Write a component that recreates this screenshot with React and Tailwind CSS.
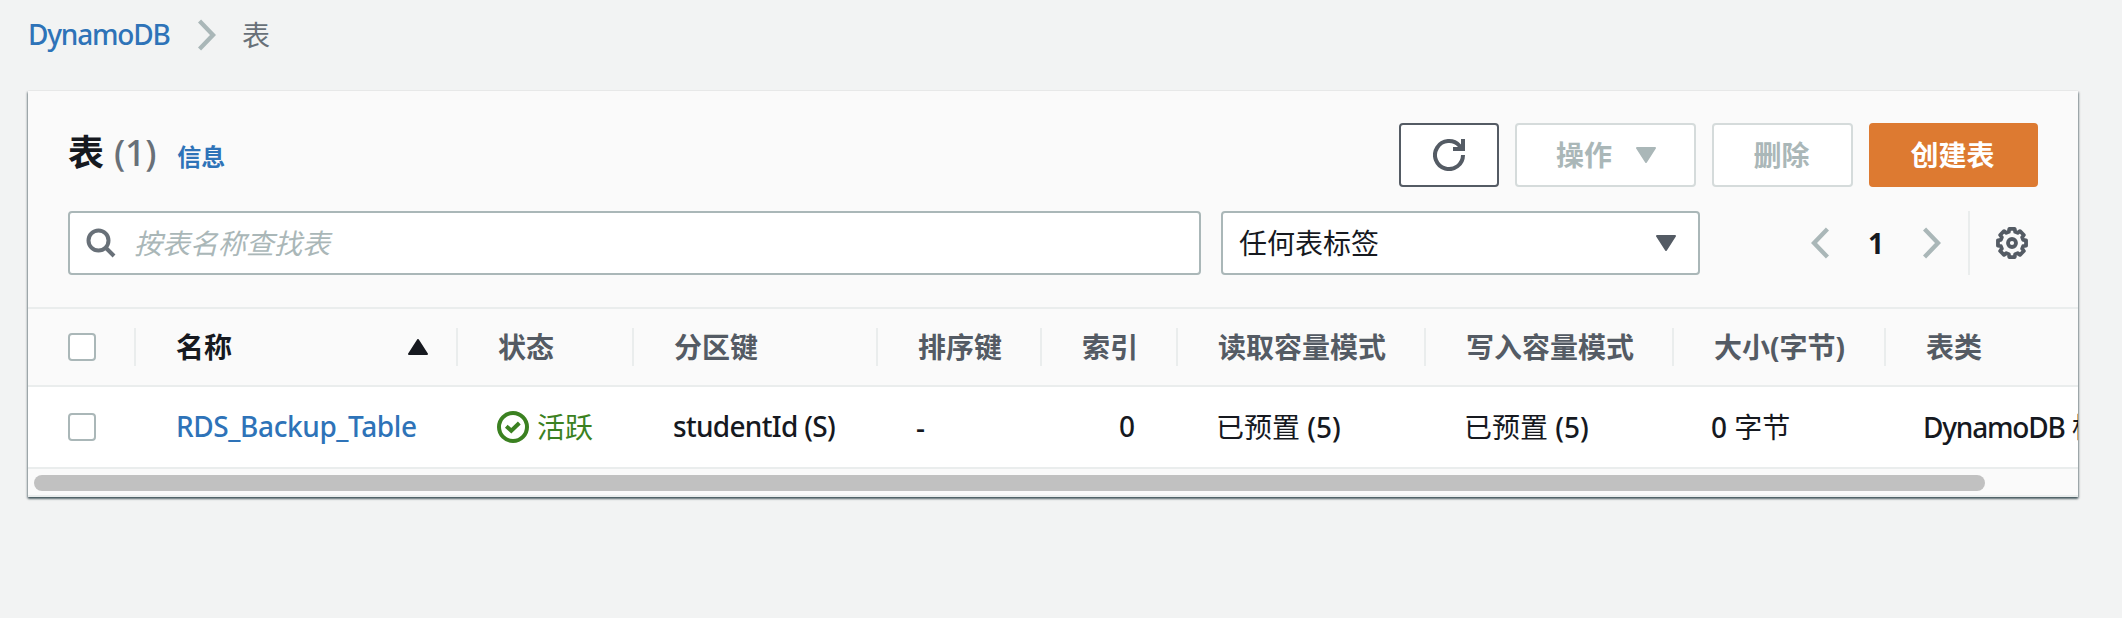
const FONT = "font-['Noto_Sans','Noto_Sans_CJK_SC',sans-serif]";

function Triangle({ up = false, className = "" }) {
  return (
    <svg viewBox="0 0 20 16" className={`h-4 w-5 shrink-0 ${className}`} fill="currentColor" stroke="currentColor" strokeWidth="2" strokeLinejoin="round">
      {up ? <path d="M10 1 19 15H1z" /> : <path d="M1 1h18l-9 14z" />}
    </svg>
  );
}

function Chevron({ left = false, className = "" }) {
  return (
    <svg viewBox="0 0 18 32" className={`h-8 w-[18px] shrink-0 ${className}`} fill="none" stroke="currentColor" strokeWidth="4.400">
      {left ? <path d="M16.500 2 3 16l13.500 14" /> : <path d="M1.500 2l13.500 14L1.500 30" />}
    </svg>
  );
}

function RefreshIcon() {
  return (
    <svg viewBox="0 0 32 32" className="h-8 w-8" fill="none" stroke="currentColor" strokeWidth="4">
      <path d="M30 16a14 14 0 1 1-3.500-9.200L29 10" />
      <path d="M30 0v10H20" />
    </svg>
  );
}

function SearchIcon() {
  return (
    <svg viewBox="0 0 30 30" className="h-[30px] w-[30px] shrink-0 text-[#687078]" fill="none" stroke="currentColor" strokeWidth="4">
      <circle cx="12.5" cy="12.5" r="10" />
      <path d="M19.500 19.500 28 28" />
    </svg>
  );
}

function gearPoints() {
  const points = [];
  for (let tooth = 0; tooth < 8; tooth += 1) {
    for (const [radius, offset] of [[14.3, -11], [14.3, 11], [11.6, 16], [11.6, 29]]) {
      const angle = ((tooth * 45 + offset) * Math.PI) / 180;
      points.push(`${(16 + radius * Math.cos(angle)).toFixed(2)},${(16 + radius * Math.sin(angle)).toFixed(2)}`);
    }
  }
  return points.join(" ");
}

function GearIcon() {
  return (
    <svg viewBox="0 0 32 32" className="h-8 w-8 text-[#545b64]" fill="none" stroke="currentColor" strokeWidth="3.800" strokeLinejoin="round">
      <polygon points={gearPoints()} />
      <circle cx="16" cy="16" r="4" />
    </svg>
  );
}

function StatusIcon() {
  return (
    <svg viewBox="0 0 32 32" className="h-8 w-8 shrink-0" fill="none" stroke="currentColor" strokeWidth="4">
      <circle cx="16" cy="16" r="14" />
      <path d="M9.300 15.200 14.300 19.800 22.300 12" />
    </svg>
  );
}

function Checkbox() {
  return <span className="block h-7 w-7 rounded-[4px] border-2 border-[#aab7b8] bg-white" />;
}

const columns = [
  { label: "名称", width: "w-[322px]" },
  { label: "状态", width: "w-[176px]" },
  { label: "分区键", width: "w-[244px]" },
  { label: "排序键", width: "w-[164px]" },
  { label: "索引", width: "w-[136px]" },
  { label: "读取容量模式", width: "w-[248px]" },
  { label: "写入容量模式", width: "w-[248px]" },
  { label: "大小(字节)", width: "w-[212px]" },
  { label: "表类", width: "w-[300px]" },
];

const button = "flex h-16 items-center justify-center rounded-[4px] border-2 text-[28px] font-bold";

export default function App() {
  return (
    <div className={`flex h-[618px] w-[2122px] flex-col overflow-hidden bg-[#f2f3f3] pl-7 text-[28px] leading-[44px] text-[#16191f] ${FONT}`}>
      <nav className="flex h-[91px] items-start pt-[13px]">
        <a className="-mt-px w-[170px] font-medium tracking-[-1.2px] text-[#2e73b8]">DynamoDB</a>
        <Chevron className="mt-[6px] text-[#aab7b8]" />
        <span className="ml-[26px] text-[#687078]">表</span>
      </nav>

      <main className="h-[406px] w-[2050px] overflow-hidden bg-[#fafafa] shadow-[0_2px_2px_0_rgba(0,28,36,0.5),1px_1px_2px_0_rgba(0,28,36,0.3),-1px_1px_2px_0_rgba(0,28,36,0.3)]">
        <header className="flex h-[96px] items-end justify-between pl-10 pr-10">
          <div className="flex h-16 items-baseline">
            <h1 className="text-[36px] font-bold leading-[60px]">表</h1>
            <span className="ml-[10px] text-[36px] font-medium tracking-[-0.3px] text-[#687078]">(1)</span>
            <a className="ml-[21px] text-[24px] font-bold text-[#2e73b8]">信息</a>
          </div>
          <div className="flex gap-4">
            <button className={`${button} w-[100px] border-[#545b64] bg-white text-[#545b64]`}><RefreshIcon /></button>
            <button className={`${button} w-[181px] gap-[24px] border-[#d5dbdb] bg-white pl-px text-[#aab7b8]`}>操作<Triangle /></button>
            <button className={`${button} w-[141px] border-[#d5dbdb] bg-white pr-[2px] text-[#aab7b8]`}>删除</button>
            <button className={`${button} w-[169px] border-[#dd7a31] bg-[#dd7a31] pr-[2px] text-white`}>创建表</button>
          </div>
        </header>

        <section className="flex h-[120px] items-start pl-10 pt-6">
          <div className="flex h-16 w-[1133px] items-center rounded-[4px] border-2 border-[#aab7b8] bg-white pl-4">
            <SearchIcon />
            <span className="ml-[18px] italic text-[#aab7b8]">按表名称查找表</span>
          </div>
          <div className="ml-5 flex h-16 w-[479px] items-center justify-between rounded-[4px] border-2 border-[#aab7b8] bg-white pl-4 pr-[22px]">
            任何表标签
            <Triangle className="text-[#545b64]" />
          </div>
          <div className="ml-[111px] flex h-16 items-center text-[#aab7b8]">
            <Chevron left />
            <span className="w-[94px] text-center text-[28px] font-bold text-[#16191f]">1</span>
            <Chevron />
            <span className="ml-[27px] mr-[26px] h-16 w-[2px] bg-[#eaeded]" />
            <GearIcon />
          </div>
        </section>

        <div className="flex h-20 w-[2200px] items-center border-y-2 border-[#eaeded] font-bold text-[#545b64]">
          <div className="flex w-[106px] shrink-0 pl-10"><Checkbox /></div>
          {columns.map((c, i) => (
            <div key={c.label} className={`flex h-[38px] shrink-0 items-center whitespace-nowrap border-l-2 border-[#eaeded] pl-10 ${c.width} ${i === 0 ? "justify-between pr-[28px] text-[#16191f]" : ""}`}>
              {c.label}
              {i === 0 && <Triangle up />}
            </div>
          ))}
        </div>

        <div className="flex h-[82px] w-[2200px] items-center whitespace-nowrap border-b-2 border-[#eaeded] bg-white">
          <div className="w-[148px] shrink-0 pl-10"><Checkbox /></div>
          <div className="w-[321px] shrink-0 pb-[2px] font-medium tracking-[-0.4px] text-[#2e73b8]">RDS_Backup_Table</div>
          <div className="flex w-[176px] shrink-0 items-center gap-2 text-[#3b8121]"><StatusIcon />活跃</div>
          <div className="w-[243px] shrink-0 pb-[2px] font-medium tracking-[-0.7px]">studentId (S)</div>
          <div className="w-[163px] shrink-0 font-medium">-</div>
          <div className="w-[56px] shrink-0 pb-[2px] text-right font-medium">0</div>
          <div className="ml-[81px] w-[248px] shrink-0">已预置 <span className="font-medium">(5)</span></div>
          <div className="w-[247px] shrink-0">已预置 <span className="font-medium">(5)</span></div>
          <div className="w-[212px] shrink-0"><span className="font-medium">0</span> 字节</div>
          <div className="shrink-0"><span className="font-medium tracking-[-1.2px]">DynamoDB</span> 标准</div>
        </div>

        <div className="flex h-7 items-start border-b-2 border-[#eaeded] pl-[6px] pt-[6px]">
          <div className="h-4 w-[1951px] rounded-full bg-[#c1c1c1]" />
        </div>
      </main>
    </div>
  );
}
